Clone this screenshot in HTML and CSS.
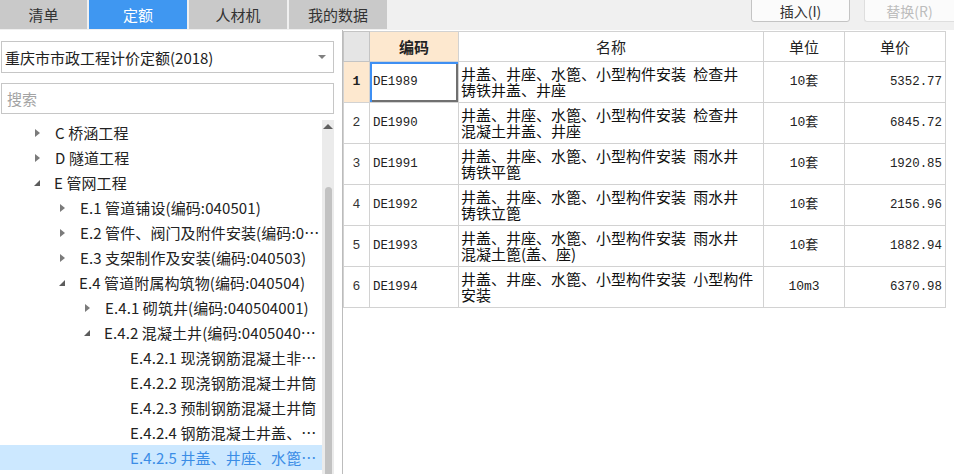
FILE: index.html
```html
<!DOCTYPE html>
<html lang="zh-CN">
<head>
  <meta charset="UTF-8" />
  <title>定额</title>
  <link rel="stylesheet" href="styles.css">
</head>
<body>
<div class="topbar">
  <div class="tabs">
    <div class="tab first">清单</div>
    <div class="tab active">定额</div>
    <div class="tab">人材机</div>
    <div class="tab">我的数据</div>
  </div>
  <div class="actions">
    <button class="btn">插入(I)</button>
    <button class="btn disabled">替换(R)</button>
  </div>
</div>

<div class="main">
  <div class="left">
    <div class="combo">
      <span>重庆市市政工程计价定额(2018)</span>
      <i class="caret"></i>
    </div>
    <div class="search">搜索</div>
    <div class="treewrap">
      <ul class="tree">
        <li class="l0"><i class="arr"></i><span>C 桥涵工程</span></li>
        <li class="l0"><i class="arr"></i><span>D 隧道工程</span></li>
        <li class="l0"><i class="arr open"></i><span>E 管网工程</span></li>
        <li class="l1"><i class="arr"></i><span>E.1 管道铺设(编码:040501)</span></li>
        <li class="l1"><i class="arr"></i><span>E.2 管件、阀门及附件安装(编码:040502)</span></li>
        <li class="l1"><i class="arr"></i><span>E.3 支架制作及安装(编码:040503)</span></li>
        <li class="l1"><i class="arr open"></i><span>E.4 管道附属构筑物(编码:040504)</span></li>
        <li class="l2"><i class="arr"></i><span>E.4.1 砌筑井(编码:040504001)</span></li>
        <li class="l2"><i class="arr open"></i><span>E.4.2 混凝土井(编码:040504002)</span></li>
        <li class="l3"><span>E.4.2.1 现浇钢筋混凝土非定型井</span></li>
        <li class="l3"><span>E.4.2.2 现浇钢筋混凝土井筒</span></li>
        <li class="l3"><span>E.4.2.3 预制钢筋混凝土井筒</span></li>
        <li class="l3"><span>E.4.2.4 钢筋混凝土井盖、井座</span></li>
        <li class="l3 selected"><span>E.4.2.5 井盖、井座、水篦、小型构件安装</span></li>
      </ul>
      <div class="scrollbar">
        <i class="up"></i>
        <div class="thumb"></div>
      </div>
    </div>
  </div>

  <div class="right">
    <table class="grid">
      <colgroup>
        <col class="c-no"><col class="c-code"><col class="c-name"><col class="c-unit"><col class="c-price">
      </colgroup>
      <thead>
        <tr>
          <th class="corner"></th>
          <th class="hl">编码</th>
          <th>名称</th>
          <th>单位</th>
          <th>单价</th>
        </tr>
      </thead>
      <tbody>
        <tr class="current">
          <td class="no">1</td>
          <td class="code focus">DE1989</td>
          <td class="name">井盖、井座、水篦、小型构件安装 检查井<br>铸铁井盖、井座</td>
          <td class="unit">10套</td>
          <td class="price">5352.77</td>
        </tr>
        <tr>
          <td class="no">2</td>
          <td class="code">DE1990</td>
          <td class="name">井盖、井座、水篦、小型构件安装 检查井<br>混凝土井盖、井座</td>
          <td class="unit">10套</td>
          <td class="price">6845.72</td>
        </tr>
        <tr>
          <td class="no">3</td>
          <td class="code">DE1991</td>
          <td class="name">井盖、井座、水篦、小型构件安装 雨水井<br>铸铁平篦</td>
          <td class="unit">10套</td>
          <td class="price">1920.85</td>
        </tr>
        <tr>
          <td class="no">4</td>
          <td class="code">DE1992</td>
          <td class="name">井盖、井座、水篦、小型构件安装 雨水井<br>铸铁立篦</td>
          <td class="unit">10套</td>
          <td class="price">2156.96</td>
        </tr>
        <tr>
          <td class="no">5</td>
          <td class="code">DE1993</td>
          <td class="name">井盖、井座、水篦、小型构件安装 雨水井<br>混凝土篦(盖、座)</td>
          <td class="unit">10套</td>
          <td class="price">1882.94</td>
        </tr>
        <tr>
          <td class="no">6</td>
          <td class="code">DE1994</td>
          <td class="name">井盖、井座、水篦、小型构件安装 小型构件<br>安装</td>
          <td class="unit">10m3</td>
          <td class="price">6370.98</td>
        </tr>
      </tbody>
    </table>
  </div>
</div>
</body>
</html>
```

FILE: styles.css
```css
html, body {
  margin: 0;
  padding: 0;
  height: 100%;
  overflow: hidden;
  background: #fff;
  font-family: "Noto Sans CJK SC", "Noto Sans", sans-serif;
  color: #222;
}

ul { margin: 0; padding: 0; list-style: none; }

/* top tabs */
.topbar {
  display: flex;
  justify-content: space-between;
  height: 30px;
  background: #f0f0f0;
}

.tabs {
  display: flex;
  gap: 2px;
}

.tab {
  width: 98px;
  height: 29px;
  background: #c9c9c9;
  color: #333;
  font-size: 15px;
  display: flex;
  align-items: center;
  justify-content: center;
}

.tab.first { width: 87px; }

.tab.active {
  background: #3f97f1;
  color: #fff;
}

.actions {
  display: flex;
  gap: 14px;
  align-items: flex-start;
}

.btn {
  width: 99px;
  height: 23px;
  margin-top: -1px;
  border: 1px solid #c4c4c4;
  border-radius: 0 0 3px 3px;
  background: #fbfbfb;
  font-family: inherit;
  font-size: 14px;
  color: #333;
  padding: 0;
}

.btn.disabled {
  width: 90px;
  color: #bdbdbd;
  border-color: #dedede;
  border-right: none;
  border-radius: 0 0 0 3px;
}

/* layout */
.main {
  display: flex;
  height: 444px;
}

.left {
  width: 342px;
  flex: none;
  padding-top: 11px;
  box-sizing: border-box;
  display: flex;
  flex-direction: column;
}

.combo, .search {
  margin-left: 1px;
  width: 333px;
  box-sizing: border-box;
  border: 1px solid #c6c6c6;
  font-size: 15px;
  display: flex;
  align-items: center;
  padding-left: 3px;
}

.combo {
  height: 32px;
  justify-content: space-between;
  padding-right: 7px;
}

.caret {
  width: 0;
  height: 0;
  border-left: 4px solid transparent;
  border-right: 4px solid transparent;
  border-top: 4px solid #808080;
}

.search {
  height: 31px;
  margin-top: 10px;
  color: #a3a3a3;
  padding-left: 5px;
}

/* tree */
.treewrap {
  display: flex;
  flex: 1;
  margin-top: 6px;
  width: 335px;
  min-height: 0;
}

.tree {
  width: 322px;
  flex: none;
}

.tree li {
  height: 25px;
  display: flex;
  align-items: center;
  font-size: 15px;
  letter-spacing: 0.1px;
  color: #222;
  white-space: nowrap;
  overflow: hidden;
  padding-right: 2px;
  box-sizing: border-box;
}

.tree li span {
  overflow: hidden;
  text-overflow: ellipsis;
}

.tree .l0 { padding-left: 34px; }
.tree .l1 { padding-left: 59px; }
.tree .l2 { padding-left: 84px; }
.tree .l3 { padding-left: 130px; }

.arr {
  flex: none;
  width: 0;
  height: 0;
  margin-right: 15px;
  margin-left: 1px;
  border-top: 4px solid transparent;
  border-bottom: 4px solid transparent;
  border-left: 5px solid #7b7b7b;
}

.arr.open {
  margin-left: 0;
  margin-right: 14px;
  border-top: 6px solid transparent;
  border-bottom: 0;
  border-left: 0;
  border-right: 6px solid #5c5c5c;
}

.tree li.selected {
  background: #cce8ff;
  color: #3b8de6;
}

.scrollbar {
  flex: none;
  width: 12px;
  background: #ebebeb;
  display: flex;
  flex-direction: column;
  align-items: center;
}

.up {
  margin-top: 4px;
  width: 0;
  height: 0;
  border-left: 5px solid transparent;
  border-right: 5px solid transparent;
  border-bottom: 5px solid #606060;
}

.thumb {
  margin-top: 58px;
  width: 7px;
  flex: 1;
  background: #c2c2c2;
  border-radius: 4px 4px 0 0;
}

/* grid */
.right {
  flex: 1;
  border-left: 1px solid #bcbcbc;
  padding-top: 1px;
}

.grid {
  border-collapse: collapse;
  table-layout: fixed;
  width: 602px;
}

.c-no { width: 26px; }
.c-code { width: 89px; }
.c-name { width: 305px; }
.c-unit { width: 81px; }
.c-price { width: 101px; }

.grid th, .grid td {
  border: 1px solid #d2d2d2;
  padding: 0 3px;
  white-space: nowrap;
  overflow: hidden;
}

.grid th {
  height: 29px;
  font-weight: normal;
  font-size: 15px;
  color: #222;
  background: #fff;
}

.grid th.corner {
  background: #e5e5e5;
  border-color: #c4c4c4;
}

.grid th.hl {
  background: #fde8cf;
  font-weight: bold;
}

.grid td {
  height: 40px;
  font-size: 15px;
  line-height: 16px;
}

.grid td.no {
  text-align: center;
  padding: 0;
  font-family: "Liberation Mono", monospace;
  font-size: 13px;
  color: #333;
}

.grid tr.current td.no {
  background: #fde8cf;
  font-weight: bold;
  color: #222;
}

.grid td.code, .grid td.price {
  font-family: "Liberation Mono", monospace;
  font-size: 12.4px;
}

.grid td.code.focus {
  box-shadow: inset 2px 2px 0 #3e8ff3, inset -2px -2px 0 #707070;
}

.grid td.name {
  padding-left: 2px;
  color: #111;
  word-spacing: 4px;
}

.grid td.unit {
  text-align: center;
  font-family: "Liberation Mono", "Noto Sans CJK SC", monospace;
  font-size: 13px;
}

.grid td.price {
  text-align: right;
  padding-right: 3px;
}
```
